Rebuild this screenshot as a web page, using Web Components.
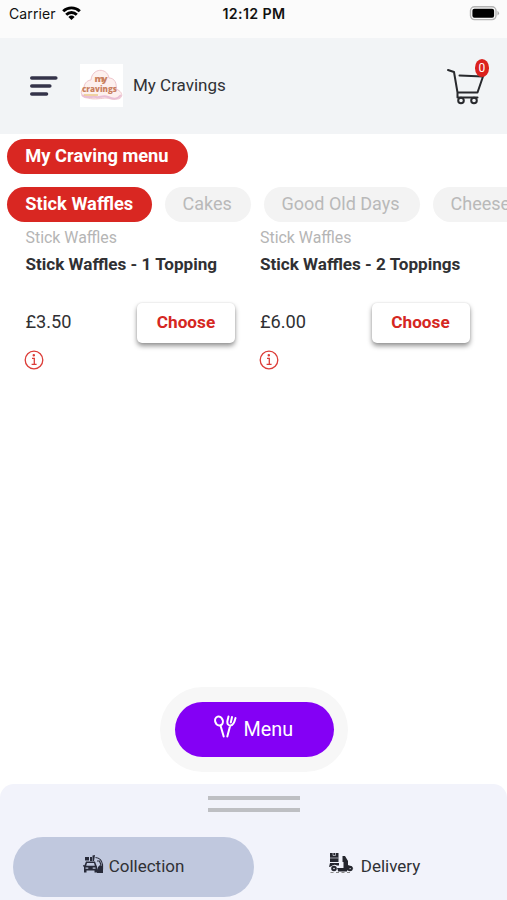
<!DOCTYPE html>
<html lang="en">
<head>
<meta charset="utf-8">
<title>My Cravings</title>
<style>
html,body{margin:0;height:100%;background:#fff}
body{font-family:Roboto,"Liberation Sans",sans-serif;color:#303135;overflow:hidden}
</style>
</head>
<body>
<craving-app></craving-app>
<script>
const define = (name, html) => {
  const t = document.createElement('template');
  t.innerHTML = html;
  customElements.define(name, class extends HTMLElement {
    constructor() {
      super();
      this.attachShadow({mode: 'open'}).appendChild(t.content.cloneNode(true));
    }
  });
};

define('status-bar', `
<style>
:host{display:grid;grid-template-columns:1fr auto 1fr;height:38px;background:#fbfbfb;color:#111;font-family:Inter,Roboto,sans-serif;font-size:14px;line-height:28px;box-sizing:border-box;padding:0 7px 0 8px}
.l{display:flex;gap:6px;letter-spacing:.1px;padding-left:1px}
.l svg{margin-top:6px}
b{font-weight:600;font-size:14.2px;letter-spacing:.4px}
.r{justify-self:end;margin-top:6px;line-height:0}
</style>
<div class="l"><span>Carrier</span>
<svg width="19" height="15" viewBox="0 0 19 15" fill="none" stroke="#000" stroke-width="2.9"><path d="M1.2 5.2a12 12 0 0 1 16.6 0M4.2 8.7a7.6 7.6 0 0 1 10.6 0"/><path d="M9.5 14 6.4 11a4.6 4.6 0 0 1 6.2 0z" fill="#000" stroke="none"/></svg></div>
<b>12:12 PM</b>
<svg class="r" width="31" height="15" viewBox="0 0 31 15"><rect x="1.5" y=".8" width="25.5" height="12.8" rx="4" fill="#fbfbfb" stroke="#b4b4b4" stroke-width="1.4"/><rect x="3.4" y="2.7" width="21.7" height="9" rx="2" fill="#000"/><path d="M28.5 4.8q3 2.4 0 4.8z" fill="#aaa"/></svg>`);

define('cravings-logo', `
<style>:host{display:block;width:43px;height:43px;background:#fff}svg{display:block}</style>
<svg width="43" height="43" viewBox="0 0 43 43">
<path d="M8 34c-7 0-9-7-4-10 0-6 5-8 7-8 1-12 16-13 18-2 6 0 8 6 7 11 8 3 7 10 1 10-5 1-8-1-11-1s-12 2-18 0z" fill="#fdf0ee" stroke="#efc5cc"/>
<path d="M2 31c4 4 10 1 14 2s7-2 12 0 9 3 13-2" fill="none" stroke="#e9bfd5" stroke-width="2"/>
<g font-family="Open Sans" font-weight="800" fill="#c9805f"><text x="14.5" y="18" font-size="9.5" textLength="13">my</text><text x="2" y="28" font-size="9" textLength="35" lengthAdjust="spacingAndGlyphs">cravings</text></g>
<path d="M4 31h14" stroke="#edcb92" stroke-width="1.6"/>
</svg>`);

define('cart-button', `
<style>
:host{display:block;position:relative;width:44px;height:46px}
svg{display:block}
span{position:absolute;left:29px;top:0;width:14.5px;height:18px;border-radius:50%;background:#db211d;color:#fff;font-size:12px;line-height:18px;text-align:center}
</style>
<svg width="44" height="46" viewBox="0 0 44 46" fill="none" stroke="#28292d" stroke-width="2" stroke-linecap="round" stroke-linejoin="round"><path d="M2 11 8 13 11.5 33.5H31.500L37 17.500 13.500 16.500M11.500 33.500V38.500H31.500"/><circle cx="15" cy="41.5" r="2.8"/><circle cx="28" cy="41.5" r="2.8"/></svg>
<span>0</span>`);

define('app-header', `
<style>
:host{display:flex;height:96px;box-sizing:border-box;background:#f2f4f6;align-items:center;padding:0 17.5px 0 29.5px}
.m{display:block}
cravings-logo{margin-left:22.5px;margin-top:-1px}
.t{margin-left:10px;margin-top:-2px;font-size:17px;line-height:24px;flex:1}
cart-button{margin-top:-9px}
</style>
<svg class="m" width="28" height="20" viewBox="0 0 28 20" stroke="#343349" stroke-width="3.6" stroke-linecap="round"><path d="M1.8 2H25.8M1.8 10H19.8M1.8 18H16.5"/></svg>
<cravings-logo></cravings-logo><span class="t"><slot></slot></span><cart-button></cart-button>`);

define('menu-pill', `
<style>
:host{display:block;box-sizing:border-box;height:35px;border-radius:18px;background:#f3f3f3;color:#b9b9b9;padding:0 18px;font-size:18px;line-height:34px;white-space:nowrap;flex:none}
:host([active]){background:#d92722;color:#fff;font-weight:700;font-size:18.3px;padding-left:18.3px;padding-right:0}
</style><slot></slot>`);

define('menu-item', `
<style>
:host{display:block;color:#303033}
.c{font-size:15.9px;line-height:24px;color:#b5b5b5;padding-left:.5px}
.n{font-size:17.1px;line-height:24px;font-weight:700;margin-top:2px;white-space:nowrap;padding-left:.5px}
.row{display:flex;justify-content:space-between;align-items:center;margin-top:27px;width:210px}
.p{font-size:18.2px;margin-top:-3px;padding-left:.5px}
button{font:700 17.2px Roboto,sans-serif;width:98px;height:40px;padding:0 0 2px;border:0;border-radius:5px;background:#fff;color:#d52722;box-shadow:0 3px 5px rgba(0,0,0,.42),0 0 2px rgba(0,0,0,.12)}
.i{display:block;margin:6.5px 0 0 -1px}
</style>
<div class="c"><slot name="category"></slot></div>
<div class="n"><slot></slot></div>
<div class="row"><span class="p"><slot name="price"></slot></span><button>Choose</button></div>
<svg class="i" width="20" height="20" viewBox="0 0 20 20" fill="none" stroke="#dc3d38" stroke-width="1.3"><circle cx="10" cy="10" r="8.8"/><path d="M8 8.3h2.3V14.3M7.6 14.4h5"/><circle cx="9.8" cy="5.3" r=".6" fill="#dc3d38"/></svg>`);

define('menu-button', `
<style>
:host{display:flex;box-sizing:border-box;width:188px;height:85px;padding:15px 14.5px;border-radius:43px;background:#f7f7f7}
div{flex:1;display:flex;border-radius:28px;background:#8400f5;color:#fff;padding-left:39px;font-size:19.8px;line-height:56px}
svg{margin:13px 7px 0 0}
</style>
<div><svg width="23" height="24" viewBox="0 0 23 24" fill="none" stroke="#fff" stroke-width="2" stroke-linecap="round" stroke-linejoin="round"><ellipse cx="5" cy="6" rx="3.8" ry="4.6" transform="rotate(-18 5 6)"/><path d="M6.5 10.5 9.7 21.5M14.5 1.5 13.3 6.5Q13.2 10.5 16.5 10.5 19.8 10.3 21.5 3M18 2 16.8 7.5M16.2 10.5 13.3 21.5"/></svg><slot></slot></div>`);

define('order-option', `
<style>
:host{display:flex;box-sizing:border-box;width:241px;height:60px;border-radius:30px;justify-content:center;font-size:17px;line-height:59px}
:host([selected]){background:#c0c8de}
::slotted(svg){margin-right:5px;flex:none}
</style><slot name="icon"></slot><slot></slot>`);

define('order-sheet', `
<style>
:host{display:flex;flex-direction:column;align-items:center;box-sizing:border-box;height:116px;background:#f2f3fb;border-radius:14px 14px 0 0;padding-top:12px}
i{width:92px;height:4px;background:#bebfc3;margin-bottom:8px;flex:none}
.o{display:flex;align-self:stretch;padding:17px 12px 0 13px}
</style><i></i><i></i><div class="o"><slot></slot></div>`);

define('craving-app', `
<style>
:host{display:flex;flex-direction:column;width:507px;height:900px;overflow:hidden;background:#fff}
.tabs{display:flex;padding:5px 0 0 7px}
.cats{display:flex;gap:12.5px;padding:13px 0 0 7px;overflow:hidden}
.items{display:grid;grid-template-columns:234.5px 234.5px;padding:4px 0 0 25px}
.space{flex:1}
menu-button{margin:0 0 12px 160px}
.w1{width:181px}.w2{width:145px}.w3{width:86.5px}.w4{width:156.5px}
</style>
<status-bar></status-bar>
<app-header>My Cravings</app-header>
<div class="tabs"><menu-pill active class="w1">My Craving menu</menu-pill></div>
<div class="cats"><menu-pill active class="w2">Stick Waffles</menu-pill><menu-pill class="w3">Cakes</menu-pill><menu-pill class="w4">Good Old Days</menu-pill><menu-pill>Cheesecakes</menu-pill></div>
<div class="items">
<menu-item><span slot="category">Stick Waffles</span>Stick Waffles - 1 Topping<span slot="price">£3.50</span></menu-item>
<menu-item><span slot="category">Stick Waffles</span>Stick Waffles - 2 Toppings<span slot="price">£6.00</span></menu-item>
</div>
<div class="space"></div>
<menu-button>Menu</menu-button>
<order-sheet>
<order-option selected><svg slot="icon" style="margin-top:17px" width="21" height="20" viewBox="0 0 21 20"><g fill="#272a39"><path d="M2 3h4v3.5H2zM7 3h2v4H7zM9.5 1.5 12 1l-1 6H9.5z"/><path fill-rule="evenodd" d="M3 7.5h9l1.5 4 .5 1v6h-2.5v-2h-8v2H1v-6H0v-1.3h1.5zM4 9l-.8 2.8h8.6L11 9zM2.500 13.400v1.300h2.800v-1.300zM9.700 13.400v1.300h2.800v-1.300z"/><path d="M15 13l2-2 3 1v7h-6v-3.5z"/></g><path d="M12.5 3.5q6 .5 7 7v5M14 7h2.5l1.5 4" fill="none" stroke="#272a39" stroke-width="1.2"/></svg>Collection</order-option>
<order-option><svg slot="icon" style="margin-top:16px;margin-right:7px" width="25" height="21" viewBox="0 0 25 21" fill="#25262e"><path d="M1 0h8.5v9H1z"/><path d="M4 0v2.5h2.5V0M1 5h8.5" stroke="#f2f3fb" stroke-width=".6" fill="none"/><path d="M1 10h9v2.5H8Q5 10.5 2 13.500L0 14zM13.500 3h2.500l3 5v4q4 1 5.500 4-4-2.500-6.500 2v.5H9q0-2-1-3.500h6.500V9h-1z"/><g fill="none" stroke="#25262e" stroke-width="2"><circle cx="5" cy="15.5" r="1.8"/><circle cx="21" cy="15.5" r="1.8"/></g><path d="M1.5 19.5h3M7 19.5h3M12.5 19.5h3M18 19.5h3" stroke="#888" stroke-width="1"/></svg>Delivery</order-option>
</order-sheet>`);
</script>
</body>
</html>
